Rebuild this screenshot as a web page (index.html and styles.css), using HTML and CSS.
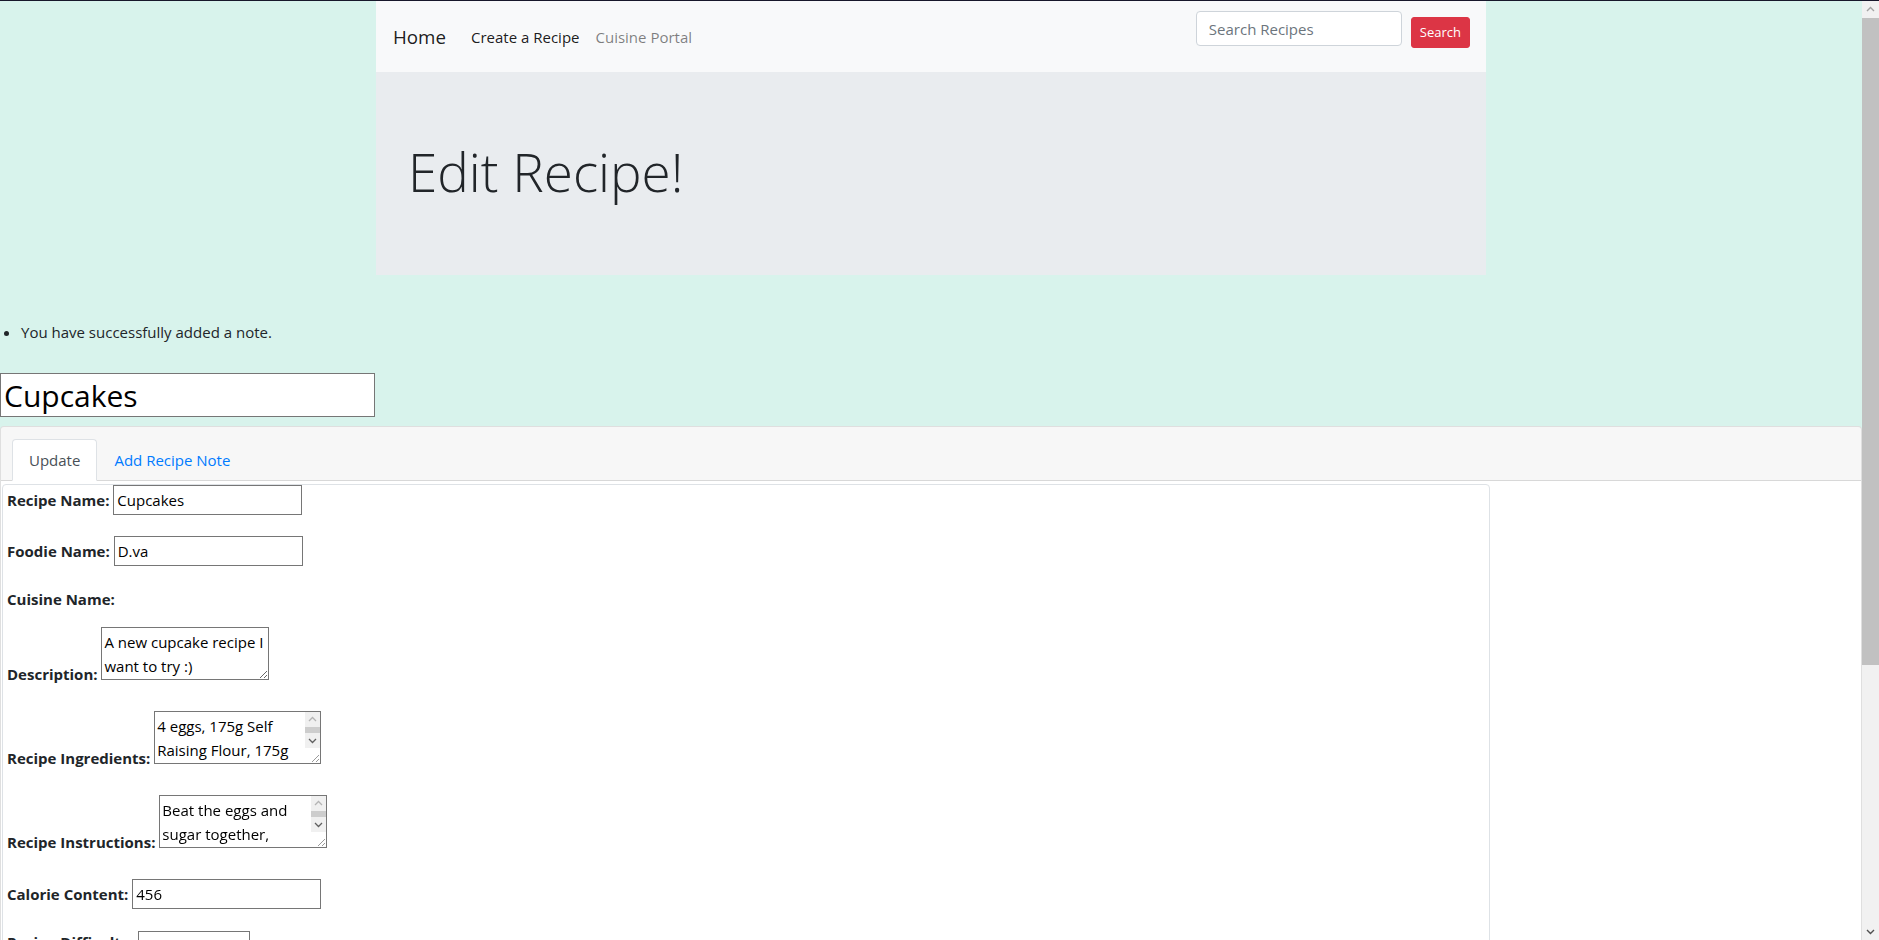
FILE: index.html
```html
<!DOCTYPE html>
<html lang="en">
<head>
<meta charset="utf-8">
<title>Edit Recipe</title>
<link rel="stylesheet" href="styles.css">
</head>
<body>
  <div class="page">
    <div class="container">
      <nav class="navbar">
        <a class="brand" href="#">Home</a>
        <ul class="nav-links">
          <li><a class="nav-link active" href="#">Create a Recipe</a></li>
          <li><a class="nav-link" href="#">Cuisine Portal</a></li>
        </ul>
        <form class="search">
          <input class="search-input" type="search" placeholder="Search Recipes">
          <button class="search-btn" type="submit">Search</button>
        </form>
      </nav>
      <div class="jumbotron">
        <h1 class="display">Edit Recipe!</h1>
      </div>
    </div>

    <ul class="flash">
      <li>You have successfully added a note.</li>
    </ul>

    <input class="title-input" type="text" value="Cupcakes">

    <div class="card">
      <div class="card-header">
        <ul class="tabs">
          <li class="tab active">Update</li>
          <li class="tab">Add Recipe Note</li>
        </ul>
      </div>
      <div class="pane">
        <form class="recipe-form">
          <div class="field"><label>Recipe Name:</label> <input class="ctl" type="text" value="Cupcakes"></div>
          <div class="field"><label>Foodie Name:</label> <input class="ctl" type="text" value="D.va"></div>
          <div class="field field-plain"><label>Cuisine Name:</label></div>
          <div class="field field-area"><label>Description:</label> <textarea class="area">A new cupcake recipe I want to try :)</textarea></div>
          <div class="field field-area"><label>Recipe Ingredients:</label> <span class="tawrap tawrap-narrow"><span class="tawrap-in"><textarea class="area-in">4 eggs, 175g Self Raising Flour, 175g Caster Sugar, 175g Butter, 1 tsp Vanilla Extract, 2 tbsp Milk</textarea><span class="tabar"><span class="tabar-btn"><svg width="15" height="15" viewBox="0 0 15 15"><polyline points="4,9 7.5,5.5 11,9" fill="none" stroke="#b4b4b4" stroke-width="1.3"/></svg></span><span class="tabar-track"><span class="tabar-thumb"></span></span><span class="tabar-btn"><svg width="15" height="15" viewBox="0 0 15 15"><polyline points="4,6 7.5,9.5 11,6" fill="none" stroke="#606060" stroke-width="1.3"/></svg></span><span class="tabar-corner"><svg width="15" height="15" viewBox="0 0 15 15"><line x1="14" y1="7" x2="7" y2="14" stroke="#9a9a9a" stroke-width="1"/><line x1="14" y1="11" x2="11" y2="14" stroke="#9a9a9a" stroke-width="1"/></svg></span></span></span></span></div>
          <div class="field field-area"><label>Recipe Instructions:</label> <span class="tawrap"><span class="tawrap-in"><textarea class="area-in">Beat the eggs and sugar together, gradually add the flour and butter, then spoon into cases and bake for 20 minutes.</textarea><span class="tabar"><span class="tabar-btn"><svg width="15" height="15" viewBox="0 0 15 15"><polyline points="4,9 7.5,5.5 11,9" fill="none" stroke="#b4b4b4" stroke-width="1.3"/></svg></span><span class="tabar-track"><span class="tabar-thumb"></span></span><span class="tabar-btn"><svg width="15" height="15" viewBox="0 0 15 15"><polyline points="4,6 7.5,9.5 11,6" fill="none" stroke="#606060" stroke-width="1.3"/></svg></span><span class="tabar-corner"><svg width="15" height="15" viewBox="0 0 15 15"><line x1="14" y1="7" x2="7" y2="14" stroke="#9a9a9a" stroke-width="1"/><line x1="14" y1="11" x2="11" y2="14" stroke="#9a9a9a" stroke-width="1"/></svg></span></span></span></span></div>
          <div class="field"><label>Calorie Content:</label> <input class="ctl" type="text" value="456"></div>
          <div class="field"><label>Recipe Difficulty:</label> <input class="ctl ctl-num" type="number" value="5"></div>
          <div class="field"><label>Cooking Time:</label> <input class="ctl" type="text" value="20"></div>
          <div class="field"><label>Servings:</label> <input class="ctl" type="text" value="12"></div>
          <button class="update-btn" type="submit">Update Recipe</button>
        </form>
      </div>
    </div>
  </div>

  <div class="vscroll" aria-hidden="true">
    <div class="vs-btn"><svg width="17" height="17" viewBox="0 0 17 17"><polyline points="5,10 8.5,6.5 12,10" fill="none" stroke="#a3a3a3" stroke-width="1.4"/></svg></div>
    <div class="vs-thumb"></div>
    <div class="vs-track"></div>
    <div class="vs-btn"><svg width="17" height="17" viewBox="0 0 17 17"><polyline points="5,7 8.5,10.5 12,7" fill="none" stroke="#505050" stroke-width="1.4"/></svg></div>
  </div>
</body>
</html>
```

FILE: styles.css
```css
html, body {
  margin: 0;
  height: 100%;
}

body {
  display: flex;
  box-sizing: border-box;
  height: 100vh;
  overflow: hidden;
  background: #d8f3ec;
  font-family: "Open Sans", "Noto Sans", sans-serif;
  font-size: 15px;
  line-height: 24px;
  color: #212529;
  border-top: 1px solid #17172b;
}

.page {
  flex: 1 1 auto;
  min-width: 0;
  overflow-y: auto;
  padding-bottom: 8px;
}

/* fake window scrollbar */
.vscroll {
  flex: none;
  width: 17px;
  display: flex;
  flex-direction: column;
  background: #f1f1f1;
}

.vs-btn {
  height: 17px;
  flex: none;
  display: flex;
}

.vs-thumb {
  flex: none;
  height: 647px;
  background: #c1c1c1;
}

.vs-track {
  flex: 1;
}

.container {
  width: 1110px;
  margin: 0 auto;
}

/* navbar */
.navbar {
  display: flex;
  align-items: center;
  height: 71px;
  padding: 0 16px 0 17px;
  background: #f8f9fa;
}

.brand {
  font-size: 18.75px;
  line-height: 28px;
  color: rgba(0, 0, 0, 0.9);
  text-decoration: none;
  margin-right: 17px;
}

.nav-links {
  display: flex;
  list-style: none;
  margin: 0;
  padding: 0;
}

.nav-link {
  display: block;
  padding: 8px;
  color: rgba(0, 0, 0, 0.5);
  text-decoration: none;
}

.nav-link.active {
  color: rgba(0, 0, 0, 0.9);
}

.search {
  margin: 0 0 0 auto;
  align-self: stretch;
  display: flex;
  align-items: flex-start;
  gap: 9px;
}

.search-input {
  margin-top: 10px;
  width: 206px;
  height: 35px;
  box-sizing: border-box;
  padding: 0 12px;
  border: 1px solid #ced4da;
  border-radius: 4px;
  background: #fff;
  font-family: inherit;
  font-size: 15px;
  color: #495057;
  outline: none;
}

.search-input::placeholder {
  color: #6c757d;
}

.search-btn {
  margin-top: 16px;
  height: 31px;
  padding: 0 8px;
  background: #dc3545;
  border: 1px solid #dc3545;
  border-radius: 3px;
  color: #fff;
  font-family: inherit;
  font-size: 13px;
  line-height: 29px;
}

/* jumbotron */
.jumbotron {
  background: #e9ecef;
  height: 203px;
  box-sizing: border-box;
  padding: 69px 32px 0;
}

.display {
  margin: 0;
  font-size: 53px;
  line-height: 62px;
  font-weight: 300;
}

/* flash */
.flash {
  margin: 45px 0 0;
  padding-left: 21px;
}

.title-input {
  display: block;
  margin: 29px 0 0;
  width: 375px;
  height: 44px;
  box-sizing: border-box;
  padding: 0 3px;
  border: 1px solid #767676;
  background: #fff;
  font-family: inherit;
  font-size: 30px;
  color: #000;
}

/* card with tabs */
.card {
  margin-top: 9px;
  background: #fff;
  border: 1px solid rgba(0, 0, 0, 0.125);
  border-radius: 4px;
  padding-bottom: 20px;
}

.card-header {
  background: rgba(0, 0, 0, 0.03);
  padding: 12px 10px 0 11px;
  border-bottom: 1px solid rgba(0, 0, 0, 0.125);
  border-radius: 3px 3px 0 0;
}

.tabs {
  display: flex;
  list-style: none;
  margin: 0 0 -1px;
  padding: 0;
}

.tab {
  padding: 8px 16px;
  border: 1px solid transparent;
  border-radius: 4px 4px 0 0;
  color: #007bff;
}

.tab.active {
  background: #fff;
  border-color: #dee2e6 #dee2e6 #fff;
  color: #495057;
}

.pane {
  margin: 3px 0 0 1px;
  width: 80%;
  box-sizing: border-box;
  border: 1px solid #dee2e6;
  border-radius: 4px;
  padding: 0 0 150px 4px;
}

/* form rows */
.field {
  height: 35px;
  margin-bottom: 16px;
  white-space: nowrap;
}

.field-plain {
  height: 24px;
}

.field-area {
  height: 68px;
}

.field label {
  font-weight: 700;
}

.ctl {
  width: 189px;
  height: 30px;
  box-sizing: border-box;
  padding: 2px 3px;
  border: 1px solid #767676;
  background: #fff;
  font-family: inherit;
  font-size: 15px;
  line-height: 24px;
  color: #000;
  margin: 0;
}

.ctl-num {
  width: 112px;
  vertical-align: -4px;
}

.area {
  width: 168px;
  height: 53px;
  box-sizing: border-box;
  padding: 2px;
  border: 1px solid #767676;
  background: #fff;
  font-family: inherit;
  font-size: 15px;
  line-height: 24px;
  color: #000;
  overflow: auto;
  resize: both;
  margin: 0;
}

/* textarea with a visible scrollbar */
.tawrap {
  display: inline-block;
  overflow: hidden;
  width: 168px;
  height: 53px;
  box-sizing: border-box;
  border: 1px solid #767676;
  background: #fff;
}

.tawrap-narrow {
  width: 167px;
}

.tawrap-in {
  display: flex;
  height: 51px;
}

.area-in {
  flex: 1 1 0;
  min-width: 0;
  height: 51px;
  box-sizing: border-box;
  margin: 0;
  padding: 2px;
  border: 0;
  background: #fff;
  font-family: inherit;
  font-size: 15px;
  line-height: 24px;
  color: #000;
  overflow: hidden;
  resize: none;
  outline: none;
}

.tabar {
  flex: none;
  width: 15px;
  display: flex;
  flex-direction: column;
  background: #f0f0f0;
}

.tabar-btn {
  display: flex;
  height: 15px;
}

.tabar-track {
  display: flex;
  height: 6px;
}

.tabar-thumb {
  flex: 1;
  background: #cdcdcd;
}

.tabar-corner {
  display: flex;
  height: 15px;
  background: #fff;
}

.update-btn {
  font-family: inherit;
  font-size: 15px;
  line-height: 24px;
  padding: 6px 12px;
  background: #007bff;
  color: #fff;
  border: 1px solid #007bff;
  border-radius: 4px;
}
```
